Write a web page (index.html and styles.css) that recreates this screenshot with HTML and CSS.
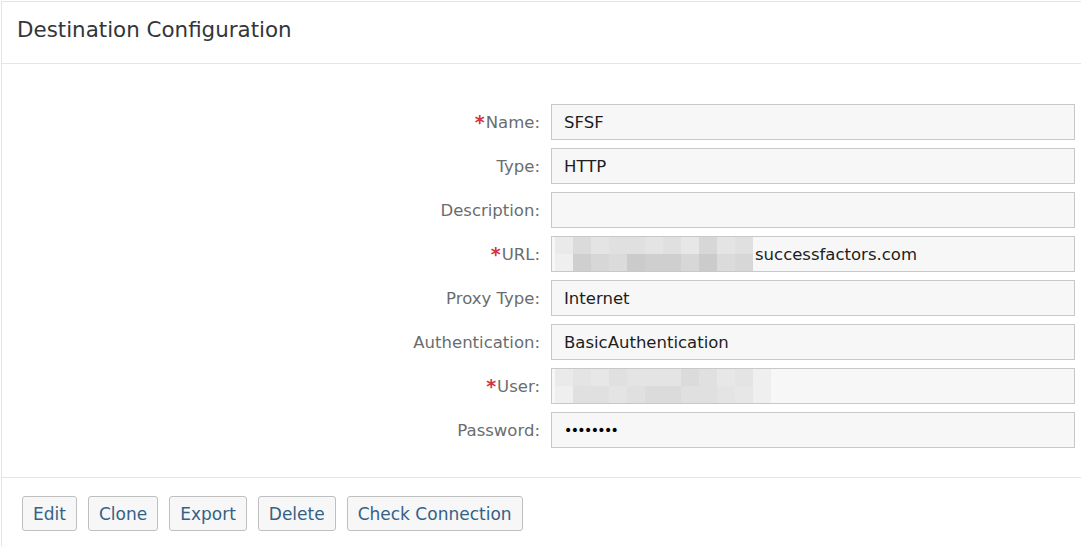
FILE: index.html
```html
<!DOCTYPE html>
<html>
<head>
<meta charset="utf-8">
<link rel="stylesheet" href="styles.css">
</head>
<body>
<div class="panel">
  <div class="header"><h1 class="title">Destination Configuration</h1></div>
  <div class="form">
    <label class="lbl"><span class="req">*</span>Name:</label>
    <div class="field">SFSF</div>
    <label class="lbl">Type:</label>
    <div class="field">HTTP</div>
    <label class="lbl">Description:</label>
    <div class="field"></div>
    <label class="lbl"><span class="req">*</span>URL:</label>
    <div class="field masked">
      <div class="mosaic m11">
        <i class="c8"></i><i class="c4"></i><i class="c6"></i><i class="c5"></i><i class="c5"></i><i class="c6"></i><i class="c5"></i><i class="c7"></i><i class="c3"></i><i class="c6"></i><i class="c5"></i>
        <i class="c9"></i><i class="c1"></i><i class="c3"></i><i class="c4"></i><i class="c0"></i><i class="c1"></i><i class="c1"></i><i class="c3"></i><i class="c0"></i><i class="c4"></i><i class="c3"></i>
      </div><span>successfactors.com</span>
    </div>
    <label class="lbl">Proxy Type:</label>
    <div class="field">Internet</div>
    <label class="lbl">Authentication:</label>
    <div class="field">BasicAuthentication</div>
    <label class="lbl"><span class="req">*</span>User:</label>
    <div class="field masked">
      <div class="mosaic m12">
        <i class="c8"></i><i class="c6"></i><i class="c7"></i><i class="c5"></i><i class="c6"></i><i class="c6"></i><i class="c6"></i><i class="c4"></i><i class="c5"></i><i class="c7"></i><i class="c6"></i><i class="c9"></i>
        <i class="c9"></i><i class="c5"></i><i class="c5"></i><i class="c6"></i><i class="c5"></i><i class="c4"></i><i class="c4"></i><i class="c5"></i><i class="c5"></i><i class="c6"></i><i class="c7"></i><i class="c9"></i>
      </div>
    </div>
    <label class="lbl">Password:</label>
    <div class="field pw">&#8226;&#8226;&#8226;&#8226;&#8226;&#8226;&#8226;&#8226;</div>
  </div>
  <div class="footer">
    <button class="btn">Edit</button>
    <button class="btn">Clone</button>
    <button class="btn">Export</button>
    <button class="btn">Delete</button>
    <button class="btn">Check Connection</button>
  </div>
</div>
</body>
</html>
```
FILE: styles.css
```css
html, body {
  margin: 0;
  padding: 0;
  background: #fff;
}
body {
  font-family: "DejaVu Sans", "Open Sans", Arial, sans-serif;
  overflow: hidden;
  height: 546px;
}
.panel {
  margin: 1px 0 0 1px;
  border-top: 1px solid #e5e5e5;
  border-left: 1px solid #e5e5e5;
  height: 560px;
}
.header {
  height: 62px;
  border-bottom: 1px solid #e5e5e5;
  display: flex;
  align-items: center;
  padding: 0 0 6px 15px;
  box-sizing: border-box;
}
.title {
  margin: 0;
  font-weight: 400;
  font-size: 21.4px;
  color: #32363a;
}
.form {
  display: grid;
  grid-template-columns: 538px 1fr;
  column-gap: 11px;
  row-gap: 8px;
  padding: 40px 6px 29px 0;
  border-bottom: 1px solid #e5e5e5;
}
.lbl {
  display: flex;
  align-items: center;
  justify-content: flex-end;
  height: 36px;
  font-size: 16.5px;
  color: #6a6d70;
}
.req {
  color: #d0343f;
  font-weight: 700;
  font-size: 19px;
  margin-right: 1px;
}
.field {
  box-sizing: border-box;
  height: 36px;
  border: 1px solid #c8c8c8;
  background: #f7f7f7;
  display: flex;
  align-items: center;
  padding-left: 12px;
  font-size: 16.5px;
  color: #1d1d1d;
}
.field.masked {
  padding-left: 3px;
}
.mosaic {
  display: grid;
  grid-auto-rows: 17px;
  grid-template-columns: repeat(11, 18px);
  height: 34px;
}
.mosaic.m12 {
  grid-template-columns: repeat(12, 18px);
}
.mosaic + span {
  margin-left: 2px;
}
.mosaic i { display: block; }
.c0 { background: #cbcbcb; }
.c1 { background: #cfcfcf; }
.c3 { background: #d7d7d7; }
.c4 { background: #dbdbdb; }
.c5 { background: #e0e0e0; }
.c6 { background: #e4e4e4; }
.c7 { background: #e7e7e7; }
.c8 { background: #eaeaea; }
.c9 { background: #efefef; }
.pw {
  font-size: 14px;
  letter-spacing: -1.6px;
  color: #000;
}
.footer {
  display: flex;
  gap: 11px;
  padding: 18px 0 0 20px;
}
.btn {
  font-family: inherit;
  font-size: 17px;
  color: #346187;
  background: #f7f7f7;
  border: 1px solid #bfbfbf;
  border-radius: 3px;
  height: 35px;
  padding: 0 10px;
  margin: 0;
}
```
